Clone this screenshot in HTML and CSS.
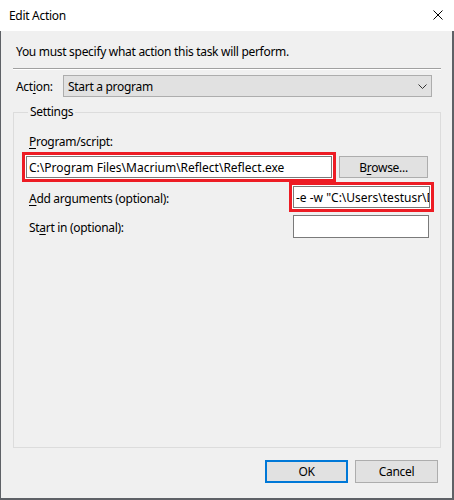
FILE: index.html
```html
<!DOCTYPE html>
<html>
<head>
<meta charset="utf-8">
<link rel="stylesheet" href="styles.css">
</head>
<body>
<div class="window">
  <div class="titlebar">
    <span class="title">Edit Action</span>
    <svg class="close" width="10" height="10" viewBox="0 0 10 10"><path d="M0.5 0.5 L9.5 9.5 M9.5 0.5 L0.5 9.5" stroke="#000" stroke-width="1" fill="none"/></svg>
  </div>
  <div class="body">
    <div class="intro">You must specify what action this task will perform.</div>
    <div class="sep"></div>
    <div class="action-row">
      <span class="action-label">Act<u>i</u>on:</span>
      <div class="combo">
        <span>Start a program</span>
        <svg class="chev" width="9" height="5" viewBox="0 0 9 5"><path d="M0.5 0.5 L4.5 4.5 L8.5 0.5" stroke="#333" stroke-width="1" fill="none"/></svg>
      </div>
    </div>
    <fieldset class="group">
      <legend>Settings</legend>
      <div class="lbl prog-lbl"><u>P</u>rogram/script:</div>
      <div class="row row1">
        <div class="hl hl-prog"><div class="tb">C:\Program Files\Macrium\Reflect\Reflect.exe</div></div>
        <div class="btn browse">B<u>r</u>owse...</div>
      </div>
      <div class="row row2">
        <div class="lbl"><u>A</u>dd arguments (optional):</div>
        <div class="hl hl-args"><div class="tb">-e -w "C:\Users\testusr\Documents\Reflect\Backup.xml"</div></div>
      </div>
      <div class="row row3">
        <div class="lbl">St<u>a</u>rt in (optional):</div>
        <div class="tb tb-start"></div>
      </div>
    </fieldset>
    <div class="buttons">
      <div class="btn ok">OK</div>
      <div class="btn cancel">Cancel</div>
    </div>
  </div>
</div>
</body>
</html>
```
FILE: styles.css
```css
* { box-sizing: border-box; }
html, body { margin: 0; padding: 0; }
body {
  width: 454px;
  height: 500px;
  overflow: hidden;
  font-family: "Noto Sans", "Liberation Sans", sans-serif;
  font-size: 12px;
  line-height: 16px;
  letter-spacing: -0.3px;
  color: #000;
  background: #f0f0f0;
}
u { text-decoration: underline; text-underline-offset: 2px; text-decoration-thickness: 1px; }
.window { width: 454px; height: 500px; display: flex; flex-direction: column; }
.titlebar {
  height: 31px;
  background: #fff;
  display: flex;
  align-items: center;
  justify-content: space-between;
  padding-left: 9px;
  padding-top: 1px;
}
.title { font-size: 12px; }
.close { margin-right: 11px; margin-top: -2px; }
.body {
  flex: 1;
  display: flex;
  flex-direction: column;
  background: #f0f0f0;
  border-left: 1px solid #5e6166;
  border-right: 2px solid #5e6166;
  border-bottom: 2px solid #5e6166;
  padding: 13px 11px 0 12px;
}
.intro { margin-left: 3px; height: 16px; }
.sep {
  margin-top: 8px;
  height: 2px;
  border-top: 1px solid #a0a0a0;
  border-bottom: 1px solid #fff;
}
.action-row { display: flex; align-items: center; margin-top: 5px; }
.action-label { margin-left: 3px; width: 47px; padding-top: 1px; }
.combo {
  width: 369px;
  height: 22px;
  background: #e1e1e1;
  border: 1px solid #adadad;
  display: flex;
  align-items: center;
  justify-content: space-between;
  padding: 1px 4px 0 4px;
}
.chev { margin-right: 0px; margin-top: 0px; }
.group {
  flex: 1;
  margin: 7px 0 0 0;
  padding: 0 6px 0 8px;
  border: 1px solid #dcdcdc;
  min-width: 0;
}
.group legend { padding: 0 2px; margin-left: 6px; line-height: 16px; }
.lbl { white-space: nowrap; }
.prog-lbl { margin-top: 14px; margin-left: 7px; }
.row { display: flex; align-items: center; }
.row1 { margin-top: 2px; }
.row2 .lbl, .row3 .lbl { margin-left: 7px; }
.row2 .lbl { margin-top: 4px; }
.row3 { margin-top: 3px; }
.row3 .lbl { margin-top: 3px; }
.hl {
  border: 3px solid #ed1c24;
  padding: 1px;
  background: #fff;
  height: 30px;
}
.hl-prog { width: 314px; }
.hl-args { width: 145px; margin-left: auto; }
.tb {
  height: 22px;
  border: 1px solid #7a7a7a;
  background: #fff;
  padding: 1px 2px 0 2px;
  line-height: 19px;
  white-space: nowrap;
  overflow: hidden;
  letter-spacing: 0;
}
.tb-start { width: 136px; height: 23px; margin-left: auto; margin-right: 5px; }
.btn {
  background: #e1e1e1;
  border: 1px solid #adadad;
  display: flex;
  align-items: center;
  justify-content: center;
  padding-top: 1px;
}
.browse { width: 89px; height: 22px; margin-left: 3px; }
.buttons {
  display: flex;
  justify-content: flex-end;
  gap: 7px;
  margin: 12px 3px 15px 0;
}
.ok, .cancel { width: 83px; height: 23px; }
.ok { border: 2px solid #0078d7; }
```
